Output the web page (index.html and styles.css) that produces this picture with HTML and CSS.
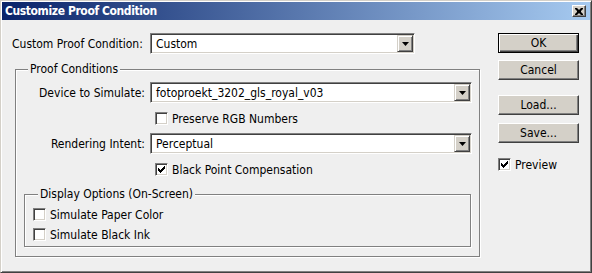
FILE: index.html
```html
<!DOCTYPE html>
<html lang="en">
<head>
    <meta charset="UTF-8">
    <title>Customize Proof Condition</title>
    <link rel="stylesheet" href="styles.css">
</head>
<body>
    <div class="window">
        <div class="titlebar">
            <span class="title">Customize Proof Condition</span>
            <span class="close">
                <svg width="8" height="7" viewBox="0 0 8 7"><path d="M0 0h2l2 2 2-2h2v1l-2 2v1l2 2v1h-2l-2-2-2 2h-2v-1l2-2v-1l-2-2z" fill="#000"/></svg>
            </span>
        </div>

        <div class="dialog">
            <div class="main">
                <div class="top-row">
                    <label class="top-label">Custom Proof Condition:</label>
                    <div class="select select-custom">
                        <span class="value">Custom</span>
                        <span class="arrow"><svg width="7" height="4" viewBox="0 0 7 4"><path d="M0 0h7l-3.5 4z" fill="#000"/></svg></span>
                    </div>
                </div>

                <fieldset class="group outer">
                    <legend>Proof Conditions</legend>

                    <div class="row">
                        <label class="row-label">Device to Simulate:</label>
                        <div class="select select-wide">
                            <span class="value">fotoproekt_3202_gls_royal_v03</span>
                            <span class="arrow"><svg width="7" height="4" viewBox="0 0 7 4"><path d="M0 0h7l-3.5 4z" fill="#000"/></svg></span>
                        </div>
                    </div>

                    <div class="check-row indent">
                        <span class="check"></span>
                        <span>Preserve RGB Numbers</span>
                    </div>

                    <div class="row row-gap">
                        <label class="row-label">Rendering Intent:</label>
                        <div class="select select-wide">
                            <span class="value">Perceptual</span>
                            <span class="arrow"><svg width="7" height="4" viewBox="0 0 7 4"><path d="M0 0h7l-3.5 4z" fill="#000"/></svg></span>
                        </div>
                    </div>

                    <div class="check-row indent">
                        <span class="check"><svg width="11" height="11" viewBox="1 1 11 11"><path d="M3 5h1v1h1v1h1v-1h1v-1h1v-1h1v-1h1v3h-1v1h-1v1h-1v1h-1v1h-1v-1h-1v-1h-1z" fill="#000"/></svg></span>
                        <span>Black Point Compensation</span>
                    </div>

                    <fieldset class="group inner">
                        <legend>Display Options (On-Screen)</legend>
                        <div class="check-row small-gap">
                            <span class="check"></span>
                            <span>Simulate Paper Color</span>
                        </div>
                        <div class="check-row small-gap">
                            <span class="check"></span>
                            <span>Simulate Black Ink</span>
                        </div>
                    </fieldset>
                </fieldset>
            </div>

            <div class="side">
                <button class="btn btn-default">OK</button>
                <button class="btn btn-cancel">Cancel</button>
                <button class="btn btn-load">Load...</button>
                <button class="btn btn-save">Save...</button>
                <div class="check-row preview">
                    <span class="check"><svg width="11" height="11" viewBox="1 1 11 11"><path d="M3 5h1v1h1v1h1v-1h1v-1h1v-1h1v-1h1v3h-1v1h-1v1h-1v1h-1v1h-1v-1h-1v-1h-1z" fill="#000"/></svg></span>
                    <span>Preview</span>
                </div>
            </div>
        </div>
    </div>
</body>
</html>
```

FILE: styles.css
```css
* {
    margin: 0;
    padding: 0;
    box-sizing: border-box;
}

body {
    width: 592px;
    height: 273px;
    font-family: "DejaVu Sans Condensed", "DejaVu Sans", sans-serif;
    font-size: 12px;
    color: #000;
    background: #efefef;
}

.window {
    width: 592px;
    height: 273px;
    background: #efefef;
    border: 1px solid;
    border-color: #d4d0c8 #404040 #404040 #d4d0c8;
    box-shadow: inset 1px 1px 0 #fff, inset -1px -1px 0 #808080;
    padding: 1px;
    display: flex;
    flex-direction: column;
}

.titlebar {
    height: 18px;
    background: linear-gradient(to right, #0a246a, #a6caf0);
    display: flex;
    align-items: center;
    justify-content: space-between;
    padding: 0 4px 0 3px;
}

.title {
    color: #fff;
    font-weight: bold;
    font-size: 12px;
    letter-spacing: -0.4px;
}

.close {
    width: 14px;
    height: 12px;
    background: #d4d0c8;
    border: 1px solid;
    border-color: #fff #404040 #404040 #fff;
    box-shadow: inset -1px -1px 0 #808080;
    display: flex;
    align-items: center;
    justify-content: center;
}

.dialog {
    display: flex;
    flex: 1;
}

.main {
    flex: 1;
    padding: 13px 0 0 10px;
}

.side {
    width: 81px;
    margin: 13px 11px 0 0;
    display: flex;
    flex-direction: column;
}

/* rows */
.top-row,
.row {
    display: flex;
    align-items: center;
    height: 21px;
}

.top-label {
    width: 138px;
}

.row {
    margin-top: 6px;
}

.row-gap {
    margin-top: 8px;
}

.row-label {
    width: 129px;
    margin-right: 5px;
    text-align: right;
}

/* dropdowns */
.select {
    height: 21px;
    display: flex;
    align-items: center;
    padding: 1px;
    background: #fff;
    border: 1px solid;
    border-color: #808080 #fff #fff #808080;
    box-shadow: inset 1px 1px 0 #404040, inset -1px -1px 0 #d4d0c8;
}

.select-custom {
    width: 265px;
}

.select-wide {
    width: 322px;
}

.select .value {
    flex: 1;
    padding-left: 4px;
    white-space: nowrap;
}

.arrow {
    width: 16px;
    height: 17px;
    background: #d4d0c8;
    border: 1px solid;
    border-color: #d4d0c8 #404040 #404040 #d4d0c8;
    box-shadow: inset 1px 1px 0 #fff, inset -1px -1px 0 #808080;
    display: flex;
    align-items: center;
    justify-content: center;
}

/* group boxes */
.group {
    border: 1px solid #808080;
    box-shadow: inset 1px 1px 0 #fff, 1px 1px 0 #fff;
    min-width: 0;
}

.group legend {
    line-height: 14px;
    padding: 0 2px;
    background: #efefef;
}

.outer {
    width: 465px;
    margin: 8px 0 0 3px;
    padding: 0 0 9px 0;
}

.outer > legend {
    margin-left: 12px;
}

.inner {
    width: 447px;
    margin: 11px 0 0 8px;
    padding: 0 0 5px 8px;
}

.inner > legend {
    margin-left: 5px;
}

/* checkboxes */
.check-row {
    display: flex;
    align-items: center;
    height: 13px;
    margin-top: 9px;
    white-space: nowrap;
}

.check-row.indent {
    padding-left: 139px;
}

.check-row.small-gap {
    margin-top: 7px;
}

.check {
    width: 13px;
    height: 13px;
    flex: none;
    margin-right: 4px;
    background: #fff;
    border: 1px solid;
    border-color: #808080 #fff #fff #808080;
    box-shadow: inset 1px 1px 0 #404040, inset -1px -1px 0 #d4d0c8;
}

.check svg {
    display: block;
}

/* buttons */
.btn {
    width: 81px;
    height: 20px;
    font-family: inherit;
    font-size: inherit;
    color: #000;
    background: #d4d0c8;
    border: 1px solid;
    border-color: #fff #404040 #404040 #fff;
    box-shadow: inset -1px -1px 0 #808080;
}

.btn-default {
    border-color: #000;
    box-shadow: inset 1px 1px 0 #fff, inset -1px -1px 0 #404040, inset -2px -2px 0 #808080;
}

.btn-cancel {
    margin-top: 7px;
}

.btn-load {
    margin-top: 15px;
}

.btn-save {
    margin-top: 8px;
}

.preview {
    margin-top: 15px;
}
```
